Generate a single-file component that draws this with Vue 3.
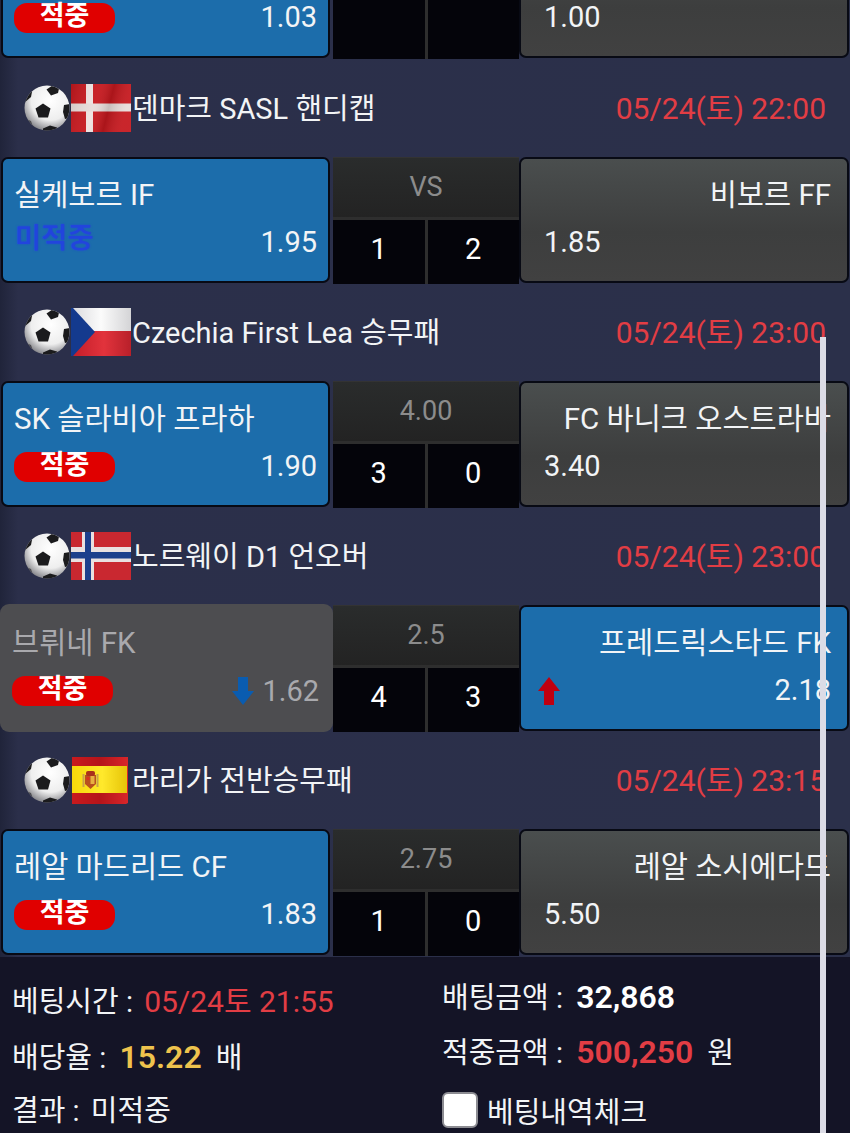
<script setup>
const matches = [
  {
    id: 'top', clipped: true,
    line: '', score: ['', ''],
    left: { name: '', odds: '1.03', status: 'hit', tone: 'blue' },
    right: { name: '', odds: '1.00', tone: 'grey' }
  },
  {
    id: 'dk', flag: 'dk', title: '덴마크 SASL 핸디캡', date: '05/24(토) 22:00',
    line: 'VS', score: [1, 2],
    left: { name: '실케보르 IF', odds: '1.95', status: 'miss', tone: 'blue' },
    right: { name: '비보르 FF', odds: '1.85', tone: 'grey' }
  },
  {
    id: 'cz', flag: 'cz', title: 'Czechia First Lea 승무패', date: '05/24(토) 23:00',
    line: '4.00', score: [3, 0],
    left: { name: 'SK 슬라비아 프라하', odds: '1.90', status: 'hit', tone: 'blue' },
    right: { name: 'FC 바니크 오스트라바', odds: '3.40', tone: 'grey' }
  },
  {
    id: 'no', flag: 'no', title: '노르웨이 D1 언오버', date: '05/24(토) 23:00',
    line: '2.5', score: [4, 3],
    left: { name: '브뤼네 FK', odds: '1.62', status: 'hit', tone: 'off', arrow: 'down' },
    right: { name: '프레드릭스타드 FK', odds: '2.18', tone: 'blue', arrow: 'up' }
  },
  {
    id: 'es', flag: 'es', title: '라리가 전반승무패', date: '05/24(토) 23:15',
    line: '2.75', score: [1, 0],
    left: { name: '레알 마드리드 CF', odds: '1.83', status: 'hit', tone: 'blue' },
    right: { name: '레알 소시에다드', odds: '5.50', tone: 'grey' }
  }
]
</script>

<template>
  <div class="screen">
    <div class="page">
      <section v-for="m in matches" :key="m.id" class="match">
        <header v-if="!m.clipped" class="league">
          <svg class="ball" viewBox="0 0 46 46" aria-hidden="true">
            <defs>
              <radialGradient :id="'b' + m.id" cx="58%" cy="34%" r="72%">
                <stop offset="0" stop-color="#ffffff" />
                <stop offset="0.6" stop-color="#eeeeee" />
                <stop offset="1" stop-color="#77777c" />
              </radialGradient>
              <clipPath :id="'c' + m.id"><circle cx="23" cy="23" r="22.500" /></clipPath>
            </defs>
            <circle cx="23" cy="23" r="22.500" :fill="'url(#b' + m.id + ')'" />
            <g :clip-path="'url(#c' + m.id + ')'" fill="#1b1b1d">
              <path d="M19 18.500l7.500 5-2.500 9h-9.500l-3-9z" />
              <path d="M22.500 4.500l6-4 6.500 3-1 4.500-7 2.500z" />
              <path d="M40 20l6-1v14l-5 1-2-7z" />
              <path d="M0 18V10l7-7 1.500 1-1.500 8z" />
              <path d="M19 43.500l7-3 7 2-1 4H19z" />
              <path d="M2 34l5 2 2 6-4 1-4-5z" fill="#4a4a4f" />
            </g>
          </svg>

          <svg v-if="m.flag === 'dk'" class="flag" viewBox="0 0 60 48" aria-hidden="true">
            <defs>
              <linearGradient id="wave" x1="0" x2="1" y1="0" y2="0.2">
                <stop offset="0" stop-color="#000" stop-opacity="0.12" />
                <stop offset="0.45" stop-color="#fff" stop-opacity="0.05" />
                <stop offset="0.7" stop-color="#000" stop-opacity="0.14" />
                <stop offset="1" stop-color="#fff" stop-opacity="0.06" />
              </linearGradient>
            </defs>
            <rect width="60" height="48" fill="#c6181e" />
            <rect x="15" width="7" height="48" fill="#efe2e0" />
            <rect y="19.500" width="60" height="8" fill="#e8dcda" />
            <rect width="60" height="48" fill="url(#wave)" />
          </svg>

          <svg v-else-if="m.flag === 'cz'" class="flag" viewBox="0 0 60 48" aria-hidden="true">
            <defs>
              <linearGradient id="czw" x1="0" x2="1" y1="0" y2="0">
                <stop offset="0" stop-color="#d9d9dc" />
                <stop offset="0.5" stop-color="#fbfbfb" />
                <stop offset="1" stop-color="#d4d4d6" />
              </linearGradient>
              <linearGradient id="czr" x1="0" x2="1" y1="0" y2="0">
                <stop offset="0" stop-color="#c21c28" />
                <stop offset="0.55" stop-color="#e2333c" />
                <stop offset="1" stop-color="#b8202a" />
              </linearGradient>
            </defs>
            <rect width="60" height="23" fill="url(#czw)" />
            <rect y="23" width="60" height="25" fill="url(#czr)" />
            <path d="M2 0l22 24L2 48H0V0z" fill="#143a8e" />
          </svg>

          <svg v-else-if="m.flag === 'no'" class="flag" viewBox="0 0 60 48" aria-hidden="true">
            <rect width="60" height="48" fill="#c92830" />
            <rect x="11" width="12" height="48" fill="#e9e0e0" />
            <rect y="15" width="60" height="15" fill="#e9e0e0" />
            <rect x="14" width="6" height="48" fill="#1c3f8c" />
            <rect y="20" width="60" height="6.500" fill="#1c3f8c" />
          </svg>

          <svg v-else class="flag flag-es" viewBox="0 0 57 48" aria-hidden="true">
            <defs>
              <linearGradient id="esr" x1="0" x2="1" y1="0" y2="0">
                <stop offset="0" stop-color="#c81a1e" />
                <stop offset="0.5" stop-color="#b5141a" />
                <stop offset="1" stop-color="#d8262a" />
              </linearGradient>
              <linearGradient id="esy" x1="0" x2="1" y1="0" y2="0">
                <stop offset="0" stop-color="#f6d80a" />
                <stop offset="0.55" stop-color="#ffe92c" />
                <stop offset="1" stop-color="#e6c408" />
              </linearGradient>
            </defs>
            <path d="M1 1h56v46l-2 1H1z" fill="url(#esr)" />
            <rect x="1" y="10" width="55" height="27" fill="url(#esy)" />
            <path d="M14 19h11v9l-5.500 5-5.500-5z" fill="#b8501e" />
            <rect x="15" y="15" width="9" height="5" rx="2" fill="#a9301c" />
            <rect x="19.500" y="20" width="4" height="8" fill="#e8b040" />
            <rect x="15.500" y="21" width="3" height="3" fill="#d8301e" />
            <rect x="11.500" y="18" width="2" height="13" fill="#c9a24a" />
            <rect x="25.500" y="18" width="2" height="13" fill="#c9a24a" />
          </svg>

          <h2 class="title">{{ m.title }}</h2>
          <time class="date">{{ m.date }}</time>
        </header>

        <div class="bets">
          <article class="side side-left" :class="'tone-' + m.left.tone">
            <div class="name">{{ m.left.name }}</div>
            <div class="meta">
              <span v-if="m.left.status === 'hit'" class="pill"><b>적중</b></span>
              <span v-else-if="m.left.status === 'miss'" class="miss">미적중</span>
              <span class="odds-wrap">
                <svg v-if="m.left.arrow === 'down'" class="arrow" viewBox="0 0 22 28" aria-hidden="true">
                  <path d="M6 0h10v14h6L11 28 0 14h6z" fill="#0a5cb0" />
                </svg>
                <span class="odds">{{ m.left.odds }}</span>
              </span>
            </div>
          </article>

          <div class="mid">
            <div class="line">{{ m.line }}</div>
            <div class="score">
              <span>{{ m.score[0] }}</span>
              <span>{{ m.score[1] }}</span>
            </div>
          </div>

          <article class="side side-right" :class="'tone-' + m.right.tone">
            <div class="name">{{ m.right.name }}</div>
            <div class="meta">
              <svg v-if="m.right.arrow === 'up'" class="arrow arrow-up" viewBox="0 0 22 28" aria-hidden="true">
                <path d="M11 0l11 14h-6v14H6V14H0z" fill="#c00010" />
              </svg>
              <span class="odds">{{ m.right.odds }}</span>
            </div>
          </article>
        </div>
      </section>

      <footer class="summary">
        <div class="col col-left">
          <p>베팅시간 : <span class="red thin">05/24토 21:55</span></p>
          <p>배당율 : <strong class="yellow">15.22</strong><span class="unit">배</span></p>
          <p>결과 : <span class="result">미적중</span></p>
        </div>
        <div class="col col-right">
          <p>배팅금액 : <strong class="amount">32,868</strong></p>
          <p>적중금액 : <strong class="amount red">500,250</strong><span class="unit">원</span></p>
          <label class="check"><span class="box"></span>베팅내역체크</label>
        </div>
      </footer>
    </div>
    <div class="scrollbar"></div>
  </div>
</template>

<style>
html, body { margin: 0; background: #141426; overflow: hidden; }
</style>

<style scoped>
.screen {
  position: relative;
  width: 850px;
  height: 1133px;
  overflow: hidden;
  font-family: Roboto, "Noto Sans CJK KR", sans-serif;
  font-size: 29px;
  color: #f2f4f6;
  background: linear-gradient(90deg, #20243a 0, #2b2f4a 18px, #2b304a 100%);
}
.page { margin-top: -69px; }
.match:first-child .bets { margin-bottom: 1px; }
.league {
  height: 96px;
  box-sizing: border-box;
  display: flex;
  align-items: center;
  padding: 0 24px;
}
.ball { width: 46px; height: 46px; flex: none; }
.flag { width: 60px; height: 48px; flex: none; margin-left: 1px; filter: blur(0.7px); }
.flag-es { width: 57px; margin-right: 3px; }
.title { margin: -5px 0 0 1px; font-size: 29px; font-weight: 400; flex: 1; white-space: nowrap; }
.date { color: #e23d44; white-space: nowrap; font-size: 30px; margin-top: -5px; }
.bets {
  display: grid;
  grid-template-columns: 333px 186px 1fr;
  height: 128px;
}
.side {
  box-sizing: border-box;
  margin: 1px 3px 1px 1px;
  border: 2px solid #080a14;
  border-radius: 7px;
  padding: 18px 11px 0 11px;
  display: flex;
  flex-direction: column;
}
.side-right { margin: 1px 1px 1px 0; padding: 18px 16px 0 23px; }
.tone-blue { background: #1c6dab; }
.tone-grey { background: linear-gradient(180deg, #4a4e4e, #3d3e3e 60%, #414141); }
.tone-off {
  margin: 0;
  border: 0;
  background: #4d4d50;
  color: #a9a9ad;
  padding: 21px 14px 0 12px;
  border-radius: 9px;
}
.name { height: 36px; line-height: 36px; white-space: nowrap; font-size: 29.500px; }
.side-right .name { text-align: right; }
.meta {
  margin-top: 15px;
  height: 30px;
  display: flex;
  align-items: center;
  justify-content: space-between;
}
.pill {
  width: 101px;
  height: 30px;
  border-radius: 13px;
  background: #e00000;
  color: #fff;
  text-align: center;
  line-height: 27px;
  font-size: 27px;
}
.pill b { font-weight: 700; }
.miss { color: #2244dd; font-size: 28.500px; font-weight: 500; margin-top: -8px; padding-left: 1px; line-height: 30px; text-shadow: 0 0 2px #2244dd; }
.odds-wrap { display: flex; align-items: center; gap: 8px; margin-left: auto; }
.odds { line-height: 30px; margin-bottom: 2px; }
.tone-off .odds { margin-bottom: 0; }
.arrow { width: 22px; height: 28px; flex: none; }
.arrow-up { margin-left: -6px; }
.mid {
  display: flex;
  flex-direction: column;
  margin: 1px 0 0;
  background: #2e2e2e;
}
.line {
  height: 60px;
  line-height: 59px;
  text-align: center;
  color: #8c8c8c;
  font-size: 27px;
  background: linear-gradient(180deg, #2a2c2c, #232323);
  border-top: 1px solid #333;
  box-sizing: border-box;
}
.score {
  flex: 1;
  margin-top: 3px;
  display: grid;
  grid-template-columns: 1fr 1fr;
  gap: 3px;
}
.score span {
  background: #04040a;
  text-align: center;
  line-height: 59px;
  color: #fff;
}
.summary {
  margin-top: 1px;
  height: 176px;
  box-sizing: border-box;
  background: #141426;
  display: grid;
  grid-template-columns: 430px 1fr;
  padding-left: 12px;
}
.col { display: flex; flex-direction: column; }
.col-left { padding-top: 27px; gap: 18.500px; }
.col-right { padding-top: 22px; gap: 19px; }
.col p { margin: 0; height: 36px; line-height: 36px; white-space: nowrap; }
.red { color: #e23d44; }
.thin { margin-left: 4px; font-size: 30px; }
.yellow { color: #eec34d; font-size: 32px; font-weight: 600; margin-left: 6px; }
.amount { color: #fff; font-size: 32px; font-weight: 600; margin-left: 6px; }
.amount.red { color: #e23d44; }
.unit { margin-left: 14px; }
.result { margin-left: 4px; }
.check { display: flex; align-items: center; gap: 9px; height: 36px; margin-top: 3px; }
.box {
  width: 36px;
  height: 36px;
  box-sizing: border-box;
  background: #fff;
  border: 2px solid #8c8c92;
  border-radius: 6px;
  flex: none;
}
.scrollbar {
  position: absolute;
  left: 820px;
  top: 337px;
  bottom: 0;
  width: 6px;
  background: #dcdce6;
}
</style>
